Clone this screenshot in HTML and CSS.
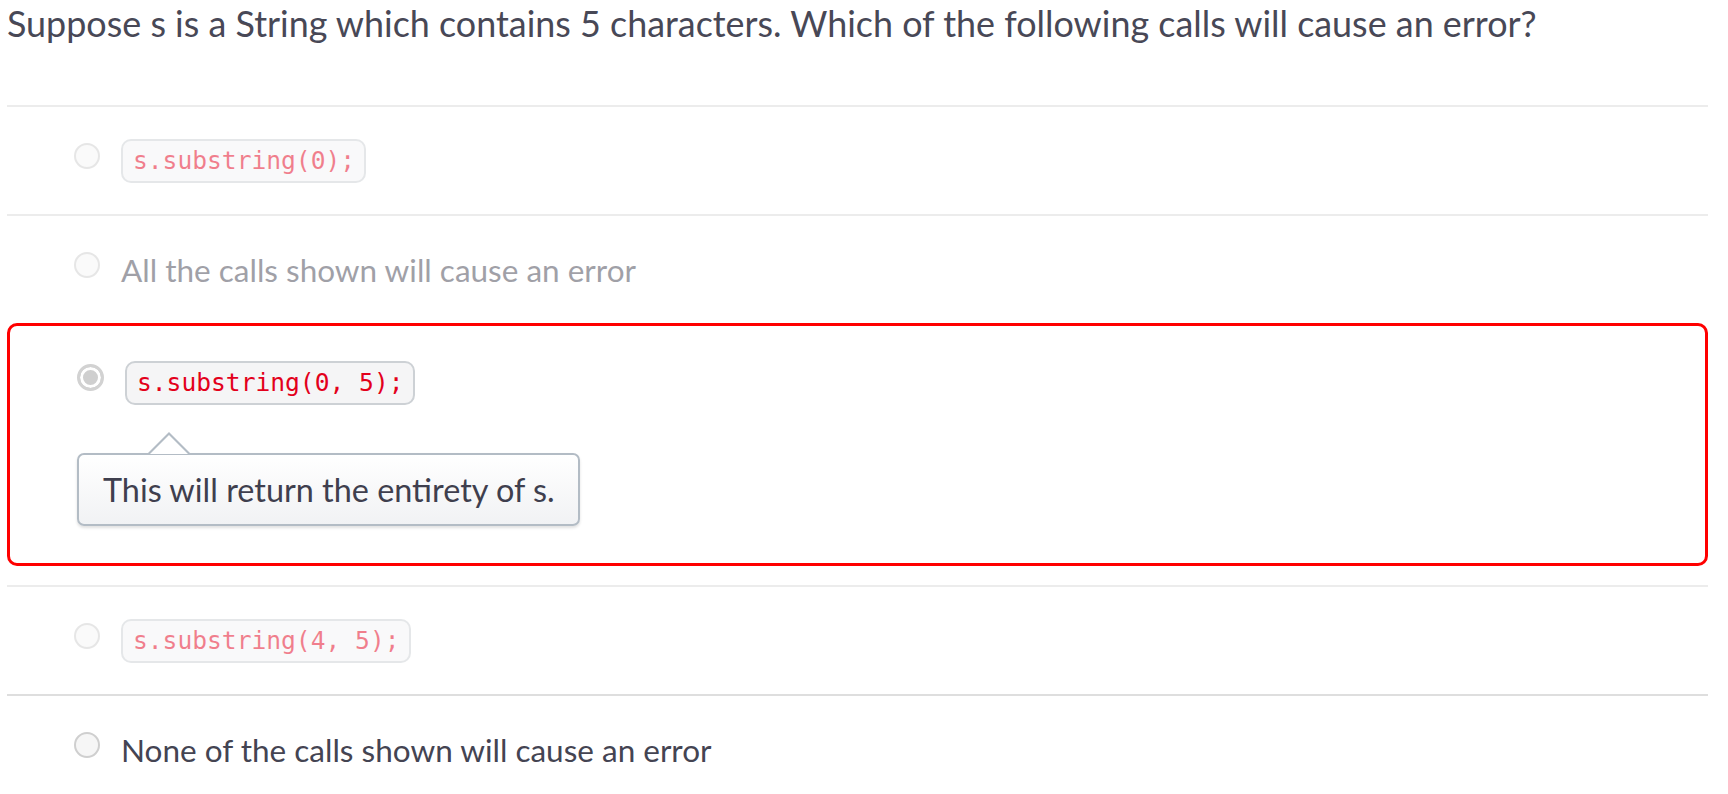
FILE: index.html
```html
<!DOCTYPE html>
<html>
<head>
<meta charset="utf-8">
<link rel="stylesheet" href="styles.css">
</head>
<body>
<div class="quiz">
  <h1 class="question">Suppose s is a String which contains 5 characters. Which of the following calls will cause an error?</h1>
  <div class="answers">
    <div class="answer faded">
      <div class="option">
        <span class="radio"></span>
        <code class="code">s.substring(0);</code>
      </div>
    </div>
    <div class="answer faded">
      <div class="option">
        <span class="radio"></span>
        <span class="label">All the calls shown will cause an error</span>
      </div>
    </div>
    <div class="answer selected">
      <div class="option">
        <span class="radio checked"></span>
        <code class="code">s.substring(0, 5);</code>
      </div>
      <div class="feedback">This will return the entirety of s.</div>
    </div>
    <div class="answer faded">
      <div class="option">
        <span class="radio"></span>
        <code class="code">s.substring(4, 5);</code>
      </div>
    </div>
    <div class="answer last">
      <div class="option">
        <span class="radio"></span>
        <span class="label">None of the calls shown will cause an error</span>
      </div>
    </div>
  </div>
</div>
</body>
</html>
```

FILE: styles.css
```css
html, body {
  margin: 0;
  padding: 0;
  background: #ffffff;
}

body {
  font-family: "Lato", "Open Sans", sans-serif;
  color: #464655;
}

.quiz {
  margin: 0 20px 0 7px;
}

.question {
  margin: 0 0 57px 0;
  font-size: 35.9px;
  font-weight: 400;
  line-height: 48px;
  color: #484856;
}

.answers {
  display: flex;
  flex-direction: column;
}

.answer {
  border-top: 2px solid #ececec;
  padding: 32px 0 31px 67px;
}

.answer.last {
  border-top-color: #dedede;
}

.answer.faded .option {
  opacity: 0.5;
}

.option {
  display: flex;
  align-items: flex-start;
  gap: 21px;
  height: 44px;
}

.radio {
  flex: none;
  box-sizing: border-box;
  width: 26px;
  height: 26px;
  margin-top: 4px;
  border-radius: 50%;
  border: 2px solid #cfcfcf;
  background: #f6f6f6;
}

.radio.checked {
  width: 27px;
  height: 27px;
  border: 3px solid #d2d2d2;
  background: #cfcfcf;
  box-shadow: inset 0 0 0 3px #ffffff;
  margin-top: 3px;
}

.code {
  box-sizing: border-box;
  height: 44px;
  line-height: 40px;
  padding: 0 9px 0 10px;
  border: 2px solid #cdd1d5;
  border-radius: 10px;
  background: #f5f5f6;
  font-family: "DejaVu Sans Mono", "Liberation Mono", monospace;
  font-size: 24.6px;
  color: #e3001b;
}

.label {
  line-height: 44px;
  font-size: 31.5px;
  color: #444452;
}

.answer.selected {
  border: 3px solid #ff0000;
  border-radius: 10px;
  padding: 35px 0 37px 67px;
  margin-bottom: 19px;
}

.feedback {
  position: relative;
  box-sizing: border-box;
  display: inline-block;
  margin-top: 48px;
  height: 73px;
  line-height: 69px;
  padding: 0 23px 0 24px;
  border: 2px solid #b3bcc5;
  border-radius: 7px;
  background: linear-gradient(#ffffff, #f1f2f4);
  box-shadow: 0 2px 3px rgba(0, 0, 0, 0.12);
  font-size: 32.4px;
  color: #3f3f4e;
}

.feedback::before,
.feedback::after {
  content: "";
  position: absolute;
  width: 0;
  height: 0;
  border-style: solid;
}

.feedback::before {
  left: 69px;
  top: -23px;
  border-width: 0 21px 21px 21px;
  border-color: transparent transparent #b3bcc5 transparent;
}

.feedback::after {
  left: 71px;
  top: -20px;
  border-width: 0 19px 19px 19px;
  border-color: transparent transparent #ffffff transparent;
}
```
